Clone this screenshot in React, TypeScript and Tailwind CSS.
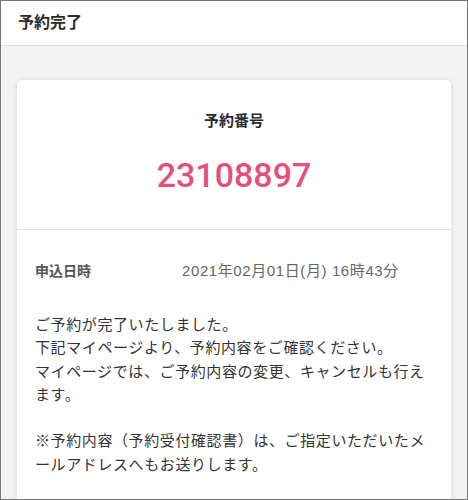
export default function App() {
  const font = { fontFamily: '"Liberation Sans", "Noto Sans CJK JP", sans-serif' };
  return (
    <div
      className="h-[500px] w-[468px] overflow-hidden border border-[#777] bg-[#f3f3f3]"
      style={font}
    >
      <header className="flex h-[45px] items-center border-b border-[#dedede] bg-white px-[17px]">
        <h1 className="text-[16px] font-bold text-[#2b2b2b]">予約完了</h1>
      </header>

      <main className="px-4 pt-[34px]">
        <section className="rounded-[5px] bg-white shadow-[0_1px_6px_rgba(0,0,0,0.12)]">
          <div className="flex flex-col items-center border-b border-[#e2e2e2] pt-[30px] pb-[34px]">
            <h2 className="text-[15px] leading-[22px] font-bold text-[#2b2b2b]">予約番号</h2>
            <p className="mt-[23px] font-['Roboto',sans-serif] text-[34px] leading-[40px] font-medium text-[#e4507d]">
              23108897
            </p>
          </div>

          <div className="px-[18px] pt-[30px] pb-8">
            <dl className="flex text-[14px] leading-[22px]">
              <dt className="w-[147px] font-bold text-[#555]">申込日時</dt>
              <dd className="text-[15px] tracking-[0.04em] text-[#666]">
                2021年02月01日(月) 16時43分
              </dd>
            </dl>
            <p className="mt-[31px] text-[15px] leading-[23.3px] tracking-[0.04em] text-[#333]">
              ご予約が完了いたしました。
              <br />
              下記マイページより、予約内容をご確認ください。
              <br />
              マイページでは、ご予約内容の変更、キャンセルも行えます。
              <br />
              <br />
              ※予約内容（予約受付確認書）は、ご指定いただいたメールアドレスへもお送りします。
            </p>
          </div>
        </section>
      </main>
    </div>
  );
}
